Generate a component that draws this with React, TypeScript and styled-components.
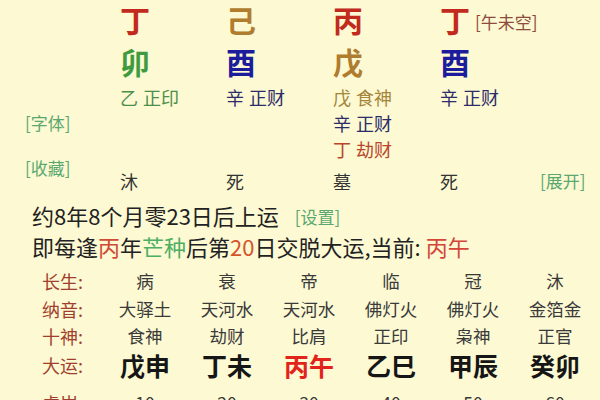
import React from 'react';
import styled, { createGlobalStyle } from 'styled-components';

const Global = createGlobalStyle`
  html, body {
    margin: 0;
    padding: 0;
    background: #fcf9d3;
  }
  body {
    font-family: "Noto Sans CJK SC", "Noto Sans", sans-serif;
    width: 600px;
    height: 400px;
    overflow: hidden;
  }
`;

const Page = styled.div`
  width: 600px;
  height: 400px;
  overflow: hidden;
  background: #fcf9d3;
  color: #2a2a2a;
  font-family: "Noto Sans CJK SC", "Noto Sans", sans-serif;
`;

const Chart = styled.div`
  display: grid;
  grid-template-columns: 120px 106px 107px 107px 100px 1fr;
  grid-template-rows: 38px 46px 26px 26px 26px 38px;
  white-space: nowrap;
`;

const Cell = styled.div<{ $col: number; $row: number }>`
  grid-column: ${(p) => p.$col};
  grid-row: ${(p) => p.$row};
`;

const Stem = styled(Cell)<{ $c: string }>`
  font-size: 30px;
  line-height: 32px;
  padding-top: 3px;
  font-weight: 700;
  color: ${(p) => p.$c};
`;

const Branch = styled(Cell)<{ $c: string }>`
  font-size: 30px;
  line-height: 32px;
  padding-top: 7px;
  font-weight: 700;
  color: ${(p) => p.$c};
`;

const Void = styled.span`
  font-size: 17px;
  font-weight: 400;
  color: #8e4c3c;
  margin-left: 5px;
  vertical-align: 3px;
`;

const Hidden = styled(Cell)<{ $c: string }>`
  font-size: 18px;
  line-height: 26px;
  color: ${(p) => p.$c};
`;

const God = styled.span`
  margin-left: 5px;
`;

const Phase = styled(Cell)`
  font-size: 18px;
  line-height: 38px;
  color: #333;
`;

const SideLink = styled.div<{ $row: string }>`
  grid-column: 1;
  grid-row: ${(p) => p.$row};
  align-self: center;
  padding-left: 25px;
  font-size: 17px;
  line-height: 24px;
  color: #5aa870;
`;

const Expand = styled.div`
  grid-column: 6;
  grid-row: 6;
  align-self: center;
  font-size: 17px;
  line-height: 24px;
  color: #5aa870;
`;

const Notice = styled.div<{ $lh: number }>`
  padding-left: 32px;
  font-size: 22px;
  line-height: ${(p) => p.$lh}px;
  color: #222;
  white-space: nowrap;
`;

const Setting = styled.span`
  font-size: 17px;
  color: #5aa870;
  margin-left: 16px;
  vertical-align: 1px;
`;

const Tint = styled.span<{ $c: string }>`
  color: ${(p) => p.$c};
`;

const Table = styled.div`
  margin-top: 7px;
  display: grid;
  grid-template-columns: 104px repeat(6, 82px);
  white-space: nowrap;
`;

const Label = styled.div<{ $h: number; $pt?: number }>`
  padding-left: 42px;
  padding-top: ${(p) => p.$pt ?? 0}px;
  font-size: 18px;
  line-height: ${(p) => p.$h}px;
  color: #a13f2e;
`;

const Value = styled.div<{ $h: number; $pt?: number }>`
  text-align: center;
  padding-top: ${(p) => p.$pt ?? 0}px;
  font-size: 17.5px;
  line-height: ${(p) => p.$h}px;
  color: #3a3a3a;
`;

const Luck = styled.div<{ $current?: boolean }>`
  text-align: center;
  font-size: 25px;
  font-weight: 700;
  line-height: 32px;
  color: ${(p) => (p.$current ? '#e2231c' : '#161616')};
`;

const RED = '#c22a1d';
const OCHRE = '#b07c2e';
const GREEN = '#3f9b3f';
const BLUE = '#1c1c9c';
const NAVY = '#2c2c6a';

const rows: { label: string; h: number; values: string[] }[] = [
  { label: '长生:', h: 28, values: ['病', '衰', '帝', '临', '冠', '沐'] },
  { label: '纳音:', h: 28, values: ['大驿土', '天河水', '天河水', '佛灯火', '佛灯火', '金箔金'] },
  { label: '十神:', h: 26, values: ['食神', '劫财', '比肩', '正印', '枭神', '正官'] },
];

const luck = ['戊申', '丁未', '丙午', '乙巳', '甲辰', '癸卯'];
const ages = ['10', '20', '30', '40', '50', '60'];

export default function App() {
  return (
    <Page>
      <Global />
      <Chart>
        <Stem $col={2} $row={1} $c={RED}>丁</Stem>
        <Stem $col={3} $row={1} $c={OCHRE}>己</Stem>
        <Stem $col={4} $row={1} $c={RED}>丙</Stem>
        <Stem $col={5} $row={1} $c={RED}>
          丁<Void>[午未空]</Void>
        </Stem>

        <Branch $col={2} $row={2} $c={GREEN}>卯</Branch>
        <Branch $col={3} $row={2} $c={BLUE}>酉</Branch>
        <Branch $col={4} $row={2} $c={OCHRE}>戊</Branch>
        <Branch $col={5} $row={2} $c={BLUE}>酉</Branch>

        <Hidden $col={2} $row={3} $c="#4b8f4b">乙<God>正印</God></Hidden>
        <Hidden $col={3} $row={3} $c={NAVY}>辛<God>正财</God></Hidden>
        <Hidden $col={4} $row={3} $c="#a5853a">戊<God>食神</God></Hidden>
        <Hidden $col={5} $row={3} $c={NAVY}>辛<God>正财</God></Hidden>
        <Hidden $col={4} $row={4} $c={NAVY}>辛<God>正财</God></Hidden>
        <Hidden $col={4} $row={5} $c="#b8452a">丁<God>劫财</God></Hidden>

        <SideLink $row="4">[字体]</SideLink>
        <SideLink $row="5 / 7">[收藏]</SideLink>

        <Phase $col={2} $row={6}>沐</Phase>
        <Phase $col={3} $row={6}>死</Phase>
        <Phase $col={4} $row={6}>墓</Phase>
        <Phase $col={5} $row={6}>死</Phase>
        <Expand>[展开]</Expand>
      </Chart>

      <Notice $lh={30}>
        约8年8个月零23日后上运<Setting>[设置]</Setting>
      </Notice>
      <Notice $lh={28}>
        即每逢<Tint $c="#d04a36">丙</Tint>年<Tint $c="#4caf63">芒种</Tint>后第
        <Tint $c="#d6542c">20</Tint>日交脱大运,当前: <Tint $c="#d4463a">丙午</Tint>
      </Notice>

      <Table>
        {rows.map((r) => (
          <React.Fragment key={r.label}>
            <Label $h={r.h}>{r.label}</Label>
            {r.values.map((v, i) => (
              <Value key={i} $h={r.h}>{v}</Value>
            ))}
          </React.Fragment>
        ))}
        <Label $h={32}>大运:</Label>
        {luck.map((v, i) => (
          <Luck key={i} $current={i === 2}>{v}</Luck>
        ))}
        <Label $h={28} $pt={8}>虚岁:</Label>
        {ages.map((v, i) => (
          <Value key={i} $h={28} $pt={8}>{v}</Value>
        ))}
      </Table>
    </Page>
  );
}
